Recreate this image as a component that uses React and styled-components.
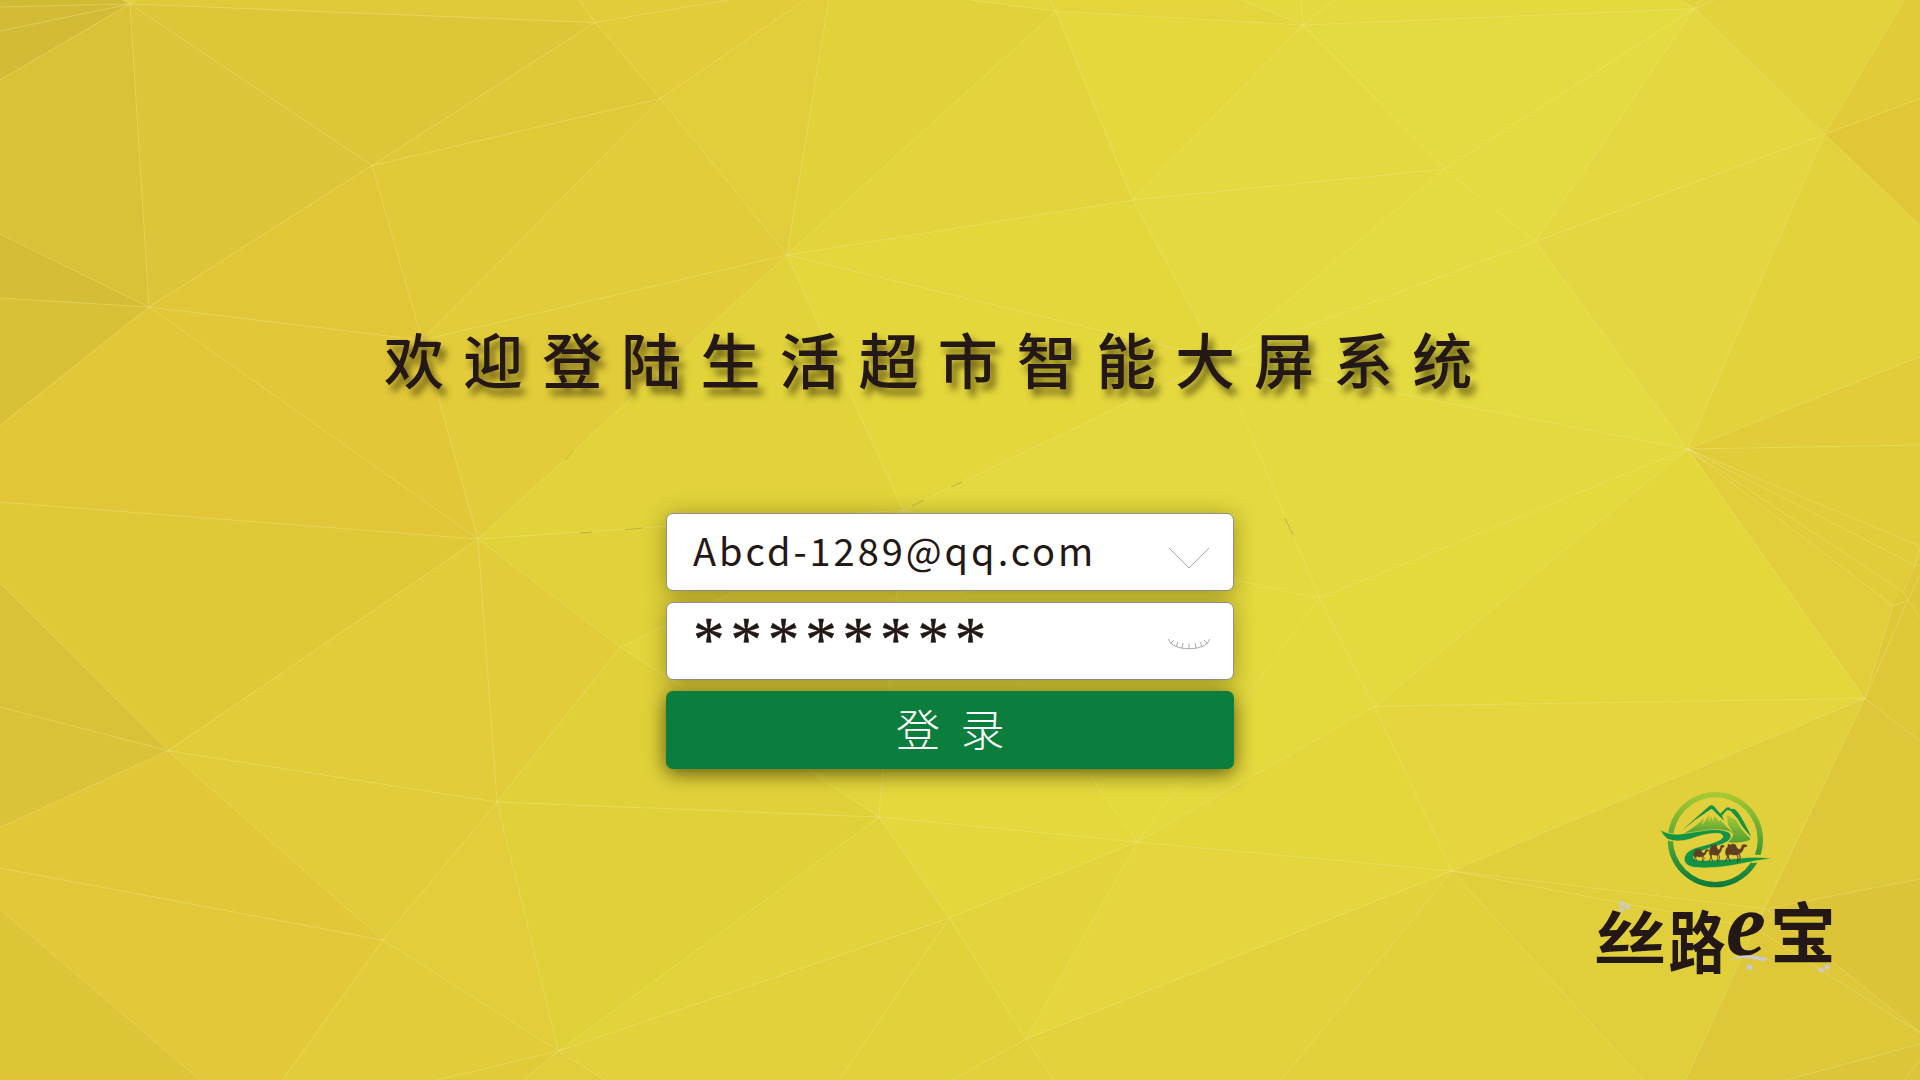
import React from "react";
import styled, { createGlobalStyle } from "styled-components";

const GlobalStyle = createGlobalStyle`
  * { box-sizing: border-box; }
  html, body { margin: 0; padding: 0; }
  body { background: #e3d33b; overflow: hidden; }
`;

const sans = `"Noto Sans CJK SC", "Noto Sans", sans-serif`;

/* ---------- faceted background ---------- */

const V = {
  A: [130, 4], B: [595, 22.5], C: [372, 165.5], D: [149, 307], E: [422, 340],
  F: [478, 539], H: [660.5, 98.5], I: [787, 255], J: [1056, 11], K: [1132.6, 200],
  L: [1303, 25], M: [1444.6, 169], N: [1219, 359], P: [903, 510], Q: [1535.5, 241.5],
  R: [1687.5, 449], S: [1319.6, 598], T: [1694.5, 8.6], U: [1824.5, 134.3],
  V: [1864.8, 698.4], W: [1893, 605.8], X: [1903, 592], Z: [1908, 600], Y: [1915, 565],
  a: [1374.3, 706.3], b: [1765.7, 908.8], c: [1452, 871], d: [1137, 842],
  e: [1026, 1039], f: [1755, 928], g: [168, 750.7], h: [497, 802], i: [383, 940],
  j: [620.4, 647], k: [558.4, 1051], l: [879, 817], m: [949.4, 918],
};

const FACETS = [
  ["#d3bb36", [0, 0], [122, 0], "A", [0, 80]],
  ["#dbc137", [0, 80], "A", "D", [0, 234]],
  ["#d6bd36", [0, 234], "D", [0, 298]],
  ["#d9c037", [0, 298], "D", [0, 425.5]],
  ["#dec438", "A", "D", "C"],
  ["#dfc538", "A", "C", "B"],
  ["#e2c939", "A", "B", [579, 0], [137, 0]],
  ["#e1c838", "B", "C", "H"],
  ["#e3cb3a", "B", [579, 0], [728, 0]],
  ["#e3cb3a", "B", "H", [805, 0], [728, 0]],
  ["#e2c938", "C", "H", "E"],
  ["#e1c737", "C", "D", "E"],
  ["#e2c838", "D", "E", "F"],
  ["#e1c738", "D", "F", [0, 502], [0, 425.5]],
  ["#e1c837", "F", [0, 502], [0, 583], "g"],
  ["#e2cc3a", "E", "H", "I"],
  ["#e2cd3a", "H", [805, 0], [828.5, 0], "I"],
  ["#e1d23a", "I", [828.5, 0], [970, 0], "J"],
  ["#e2cc3a", "E", "I", "F"],
  ["#e3d43b", "I", "J", "K"],
  ["#e1d339", "I", "F", "P"],
  ["#e4d83d", "J", "K", "L"],
  ["#e4d73c", "I", "K", "N"],
  ["#e4d73c", "I", "N", "P"],
  ["#e3d53b", "J", [970, 0], [1241, 0], "L"],
  ["#e4da3f", "K", "L", "M"],
  ["#e4da3f", "K", "M", "N"],
  ["#e4db41", "L", "T", "M"],
  ["#e4db41", "T", "M", "Q"],
  ["#e4d93e", "L", [1241, 0], [1680, 0], "T"],
  ["#e4db41", "M", "N", "Q"],
  ["#e4db41", "N", "Q", "R"],
  ["#e4d740", "T", "Q", "U"],
  ["#e4d640", "Q", "U", "R"],
  ["#e2d23c", "T", "U", [1904.5, 0], [1680, 0]],
  ["#e2cb39", "U", [1904.5, 0], [1920, 0], [1920, 98.5]],
  ["#e1c737", "U", [1920, 98.5], [1920, 225.5]],
  ["#e2d23b", "U", [1920, 225.5], [1920, 356.5], "R"],
  ["#e2cc3a", "R", [1920, 356.5], [1920, 445]],
  ["#e1cc39", "R", [1920, 445], [1920, 560], "Y", "W"],
  ["#e2cd3a", "R", "W", "V"],
  ["#dfc738", "W", "Y", [1920, 560], [1920, 618], "V"],
  ["#e4da3f", "N", "R", "S"],
  ["#e4d93e", "N", "P", "S"],
  ["#e4d93d", "R", "S", "a"],
  ["#e4d73c", "R", "a", "V"],
  ["#e4d63c", "V", "a", "c"],
  ["#e4d93d", "S", "a", "d"],
  ["#e4d73c", "a", "d", "c"],
  ["#e1cf3b", "V", "b", "c"],
  ["#dec739", "V", "b", [1920, 879], [1920, 741]],
  ["#dfc738", "V", [1920, 741], [1920, 600], "Z"],
  ["#e2d13b", "c", [1281, 1080], [1643, 1080]],
  ["#e0ce3a", "c", [1643, 1080], [1685.5, 1080], "f", "b"],
  ["#dcc338", "b", [1920, 879], [1920, 1032.5]],
  ["#dec739", "f", "b", [1920, 1032.5], [1920, 1044], [1786, 1080], [1685.5, 1080]],
  ["#dcc538", [1786, 1080], [1920, 1044], [1920, 1080]],
  ["#e3d23b", "c", "e", [1054, 1080], [1281, 1080]],
  ["#e4d63c", "c", "e", "d"],
  ["#e3d43b", "d", "m", "e"],
  ["#e4d73c", "l", "d", "m"],
  ["#e2d23a", "m", [839, 1080], [952, 1080], "e"],
  ["#e2d13a", "e", [952, 1080], [1054, 1080]],
  ["#e2d13a", "k", "m", [839, 1080], [605, 1080]],
  ["#e2d33b", "k", "l", "m"],
  ["#e1d139", "k", "l", "h"],
  ["#e1d139", "h", "j", "l"],
  ["#e1d239", "F", "j", "P"],
  ["#e3d53b", "j", "P", "l"],
  ["#e4d83d", "P", "l", "d"],
  ["#e4d93d", "P", "d", "S"],
  ["#e2cc39", "F", "h", "j"],
  ["#e3cc3a", "F", "g", "h"],
  ["#e2cc39", "g", "h", "i"],
  ["#e3cd3a", "h", "i", "k"],
  ["#e2c838", "g", "i", [0, 868], [0, 827.5]],
  ["#e3c93a", [0, 868], "i", [282.5, 1080], [200, 1080], [0, 909]],
  ["#dec437", [0, 909], [200, 1080], [0, 1080]],
  ["#dac137", [0, 583], "g", [0, 707]],
  ["#dbc238", [0, 707], "g", [0, 827.5]],
  ["#e2cc39", "i", [282.5, 1080], [437, 1080], "k"],
  ["#e2cb39", "k", [437, 1080], [524, 1080]],
  ["#e2ce3a", "k", [524, 1080], [605, 1080]],
];

/* each chain is a connected run of facet edges */
const EDGES = [
  [[0, 7], "A", "B", [728, 0]], [[0, 31], "A"], [[0, 80], "A", [137, 0]], [[122, 0], "A", "D"],
  ["A", "C", "B", "H", "I"], [[579, 0], "B"], ["D", "C", "H", [805, 0]], ["C", "E", "F"],
  [[0, 234], "D", [0, 298]], [[0, 425.5], "D", "F"], ["D", "E", "H"], [[0, 502], "F"],
  ["E", "I", "F"], ["I", [828.5, 0]], ["I", "J", [970, 0]], [[1049, 0], "J", "K", "I"],
  ["J", "L", "M", "K"], ["K", "L", [1334, 0]], [[1241, 0], "L", [1301, 0]], ["K", "N", "M"],
  ["I", "N", "P", "I"], ["N", "Q", "M"], ["N", "R", "Q", "U"], ["N", "S", "R"],
  ["L", "T", "M"], ["T", "Q"], [[1680, 0], "T", [1700.5, 0]], [[1714, 0], "T", "U", [1904.5, 0]],
  ["U", [1920, 98.5]], ["R", "U", [1920, 225.5]], ["R", [1920, 356.5]], ["R", [1920, 445]],
  ["R", "V"], ["R", "W", "Z", [1920, 575]], ["R", "X", "Z", [1920, 618]], ["R", "Y"],
  ["R", [1920, 546]], ["X", "Y", [1920, 548]], ["W", "V", "Z"], ["Y", [1920, 565]],
  ["R", "a", "V", [1920, 741]], ["V", "c", "a", "S", "P"], ["V", "f", [1685.5, 1080]],
  ["S", "d", "a"], ["c", "b", [1920, 879]], ["c", "f", [1920, 1033]], ["b", [1920, 1032]],
  ["c", [1643, 1080]], ["c", [1281, 1080]], ["c", "e", [1054, 1080]], ["c", "d", "e", [952, 1080]],
  [[1786, 1080], [1920, 1044]], [[1904.5, 1080], [1920, 1060]],
  ["F", "P", "d", "l", "P", "j", "F", "h", "g", "F"], ["j", "h", "l", "j"],
  ["h", "i", "g", [0, 583]], ["h", "k", "l", "m", "d"], ["i", "k", "m", "e"],
  ["m", [839, 1080]], [[0, 707], "g", [0, 827.5]], [[0, 868], "i", [282.5, 1080]],
  [[0, 909], [200, 1080]], [[437, 1080], "k", [524, 1080]], ["k", [605, 1080]],
];

const at = (p) => (typeof p === "string" ? V[p] : p).join(",");

const Backdrop = styled.svg`
  position: absolute;
  inset: 0;
  width: 1920px;
  height: 1080px;
`;

function Facets() {
  return (
    <Backdrop viewBox="0 0 1920 1080" aria-hidden="true">
      {FACETS.map(([fill, ...pts], n) => (
        <polygon key={n} points={pts.map(at).join(" ")} fill={fill} stroke={fill} strokeWidth="0.6" />
      ))}
      <g fill="none" stroke="#f3eaa4" strokeOpacity="0.5" strokeWidth="0.7">
        {EDGES.map((pts, n) => (
          <polyline key={n} points={pts.map(at).join(" ")} />
        ))}
      </g>
      <g stroke="#8a7a1e" strokeOpacity="0.6" strokeWidth="0.7">
        <path d="M565 460l8-9M580 533l12-1M625 529.500l18-1.500M912 506l12-6M951 487l11-5M1285 518l8 17" />
      </g>
    </Backdrop>
  );
}

/* ---------- page ---------- */

const Screen = styled.div`
  position: relative;
  width: 1920px;
  height: 1080px;
  overflow: hidden;
  font-family: ${sans};
  color: #231815;
`;

const Content = styled.main`
  position: relative;
  display: flex;
  flex-direction: column;
  height: 100%;
  padding: 318px 80px 0 384px;
`;

const Title = styled.h1`
  margin: 0;
  height: 80px;
  line-height: 80px;
  font-size: 60px;
  font-weight: 500;
  letter-spacing: 19.1px;
  white-space: nowrap;
  text-shadow: 5px 7px 7px rgba(50, 40, 0, 0.66);
`;

const LoginForm = styled.form`
  display: flex;
  flex-direction: column;
  gap: 11px;
  width: 568px;
  margin: 115px 0 0 282px;
`;

const Field = styled.label`
  display: flex;
  align-items: center;
  justify-content: space-between;
  height: 78px;
  padding: 0 22px 0 26px;
  border: 1px solid #8f8f93;
  border-radius: 7px;
  background: #fff;
  box-shadow: 0 3px 22px rgba(60, 50, 0, 0.42);
`;

const Account = styled.span`
  height: 76px;
  font-size: 38px;
  line-height: 72px;
  letter-spacing: 2.95px;
`;

const Password = styled.span`
  align-self: flex-start;
  height: 76px;
  font-family: "Liberation Serif", serif;
  font-size: 63px;
  line-height: 75px;
  letter-spacing: 5.9px;
  -webkit-text-stroke: 0.5px #231815;
`;

const FieldIcon = styled.svg`
  width: 44px;
  height: 24px;
  fill: none;
  stroke: #a9a9ab;
  stroke-width: 1;
  margin-top: ${(p) => p.$drop}px;
`;

const Submit = styled.button`
  height: 78px;
  padding: 0 0 3px 21px;
  border: 0;
  border-radius: 7px;
  background: #0b7d3c;
  color: #fff;
  font-family: ${sans};
  font-size: 44px;
  font-weight: 300;
  line-height: 75px;
  letter-spacing: 20.5px;
  box-shadow: 0 4px 20px rgba(40, 40, 0, 0.75);
`;

/* ---------- brand ---------- */

const Brand = styled.footer`
  display: flex;
  flex-direction: column;
  align-self: flex-end;
  width: 260px;
  margin-top: 11px;
`;

const Emblem = styled.svg`
  width: 150px;
  height: 115px;
  margin-left: 60px;
`;

const WordMark = styled.div`
  position: relative;
  display: flex;
  height: 100px;
  padding-left: 13px;
`;

const Glyph = styled.span`
  width: ${(p) => p.$w}px;
  height: 90px;
  line-height: 90px;
  font-family: ${(p) => (p.$latin ? `"Liberation Serif", serif` : sans)};
  font-style: ${(p) => (p.$latin ? "italic" : "normal")};
  font-size: ${(p) => p.$size}px;
  font-weight: 700;
  text-align: center;
  white-space: nowrap;
  transform: translateY(${(p) => p.$lift}px) scale(${(p) => p.$stretch || "1, 1"});
`;

const Accents = styled.svg`
  position: absolute;
  left: 0;
  top: -5px;
  width: 270px;
  height: 95px;
`;

function Camel({ x, y, sx, sy }) {
  return (
    <g transform={`translate(${x} ${y}) scale(${sx} ${sy})`} fill="#5f3f24" stroke="#5f3f24">
      <path
        strokeWidth="1"
        d="M4 26Q5 12 11 11L12 2L20 5L25 1L35 4L38 12L44 17Q50 18 52 12L54 5Q60 1 69 5L68 9L60 11Q57 24 47 29L42 32Q28 35 16 31L9 35L6 33Z"
      />
      <path fill="none" strokeWidth="3.2" d="M9 30L10 40L4 52M15 31L13 40L19 51M38 31L42 40L40 54M44 28L49 39L44 51" />
    </g>
  );
}

function BrandEmblem() {
  const ground = "#e1cf3b";
  return (
    <Emblem viewBox="0 0 450 345" aria-hidden="true">
      <defs>
        <linearGradient id="ring" x1="0" y1="0" x2="0" y2="1">
          <stop offset="0" stopColor="#aacb31" />
          <stop offset="0.5" stopColor="#5aa437" />
          <stop offset="0.75" stopColor="#2a8f3a" />
          <stop offset="1" stopColor="#0b7a3b" />
        </linearGradient>
        <linearGradient id="slope" x1="0" y1="0" x2="0" y2="1">
          <stop offset="0" stopColor="#a9ca35" />
          <stop offset="1" stopColor="#4f9f36" />
        </linearGradient>
      </defs>
      <path
        fill="url(#ring)"
        fillRule="evenodd"
        d="M226 36A143 143 0 1 1 226 322A143 143 0 1 1 226 36ZM226 52A127 127 0 1 0 226 306A127 127 0 1 0 226 52Z"
      />
      <path fill={ground} d="M58 149Q90 164 130 160L130 180Q100 188 80 181ZM335 223L398 228L395 242L335 250Z" />
      <path fill="#129444" d="M124 152L207 79Q215 72 222 79L241 101L259 83Q266 79 271 85L274 92L260 91L246 107L252 122L215 86L166 119Z" />
      <path fill="#129444" d="M270 90Q278 83 287 90Q299 98 334 170Q309 147 294 118Z" />
      <path fill="url(#slope)" d="M132 160Q170 139 192 115L185 138L207 105L208 125L214 108L219 125L222 106L240 127L240 119L280 161L268 154Q248 145 200 151Q160 157 132 160Z" />
      <path fill="url(#slope)" d="M261 105L289 121Q305 155 330 174Q334 180 319 184Q288 190 264 186Q281 175 279 160L264 134Z" />
      <path
        fill="#129444"
        stroke={ground}
        strokeWidth="2"
        d="M60 149Q94 169 137 160L195 151Q240 144 266 157Q282 169 263 184Q250 194 210 204Q172 216 160 230Q159 239 178 241Q230 242 330 232Q365 230 398 236Q350 240 295 253Q220 268 161 262Q129 256 133 232Q140 207 190 197Q239 184 248 173Q252 159 225 160Q188 162 152 177Q112 189 82 177Q70 167 60 149Z"
      />
      <Camel x={158} y={206} sx={0.71} sy={0.74} />
      <Camel x={205} y={192} sx={0.69} sy={1.02} />
      <Camel x={252} y={190} sx={1} sy={1.06} />
    </Emblem>
  );
}

export default function App() {
  return (
    <>
      <GlobalStyle />
      <Screen>
        <Facets />
        <Content>
          <Title>欢迎登陆生活超市智能大屏系统</Title>
          <LoginForm onSubmit={(ev) => ev.preventDefault()}>
            <Field>
              <Account>Abcd-1289@qq.com</Account>
              <FieldIcon viewBox="0 0 44 24" $drop={12}>
                <path d="M2 2L22 22L42 2" />
              </FieldIcon>
            </Field>
            <Field>
              <Password>********</Password>
              <FieldIcon viewBox="0 0 44 24" $drop={5}>
                <path d="M1.500 7C4 20 40 20 42.500 7M3.500 11.500L7 8M9 14.500L11 10M15 16L16 11M22 17V11.500M29 16L28 11M35 14.500L33 10M40.500 11.500L37 8" />
              </FieldIcon>
            </Field>
            <Submit type="submit">登录</Submit>
          </LoginForm>
          <Brand>
            <BrandEmblem />
            <WordMark>
              <Glyph $w={74} $size={70} $lift={-5} $stretch="1.04, 0.82">丝</Glyph>
              <Glyph $w={56} $size={60} $lift={-1} $stretch="0.95, 1.13">路</Glyph>
              <Glyph $w={46} $size={90} $lift={-15} $latin>e</Glyph>
              <Glyph $w={68} $size={66} $lift={-11}>宝</Glyph>
              <Accents viewBox="0 0 810 285" aria-hidden="true">
                <g fill="#c9cacb">
                  <path d="M120 32l14 5l-4 13l-14-5ZM138 40l13 7l-5 13l-13-7ZM120 50l13 6l-4 11l-13-5ZM502 221l16 7l-5 14l-16-7ZM738 222l13 7l-5 12l-13-5ZM718 231l14 6l-4 12l-14-5Z" />
                  <path d="M450 209Q490 185 564 205L551 215Q500 196 450 209Z" />
                </g>
              </Accents>
            </WordMark>
          </Brand>
        </Content>
      </Screen>
    </>
  );
}
